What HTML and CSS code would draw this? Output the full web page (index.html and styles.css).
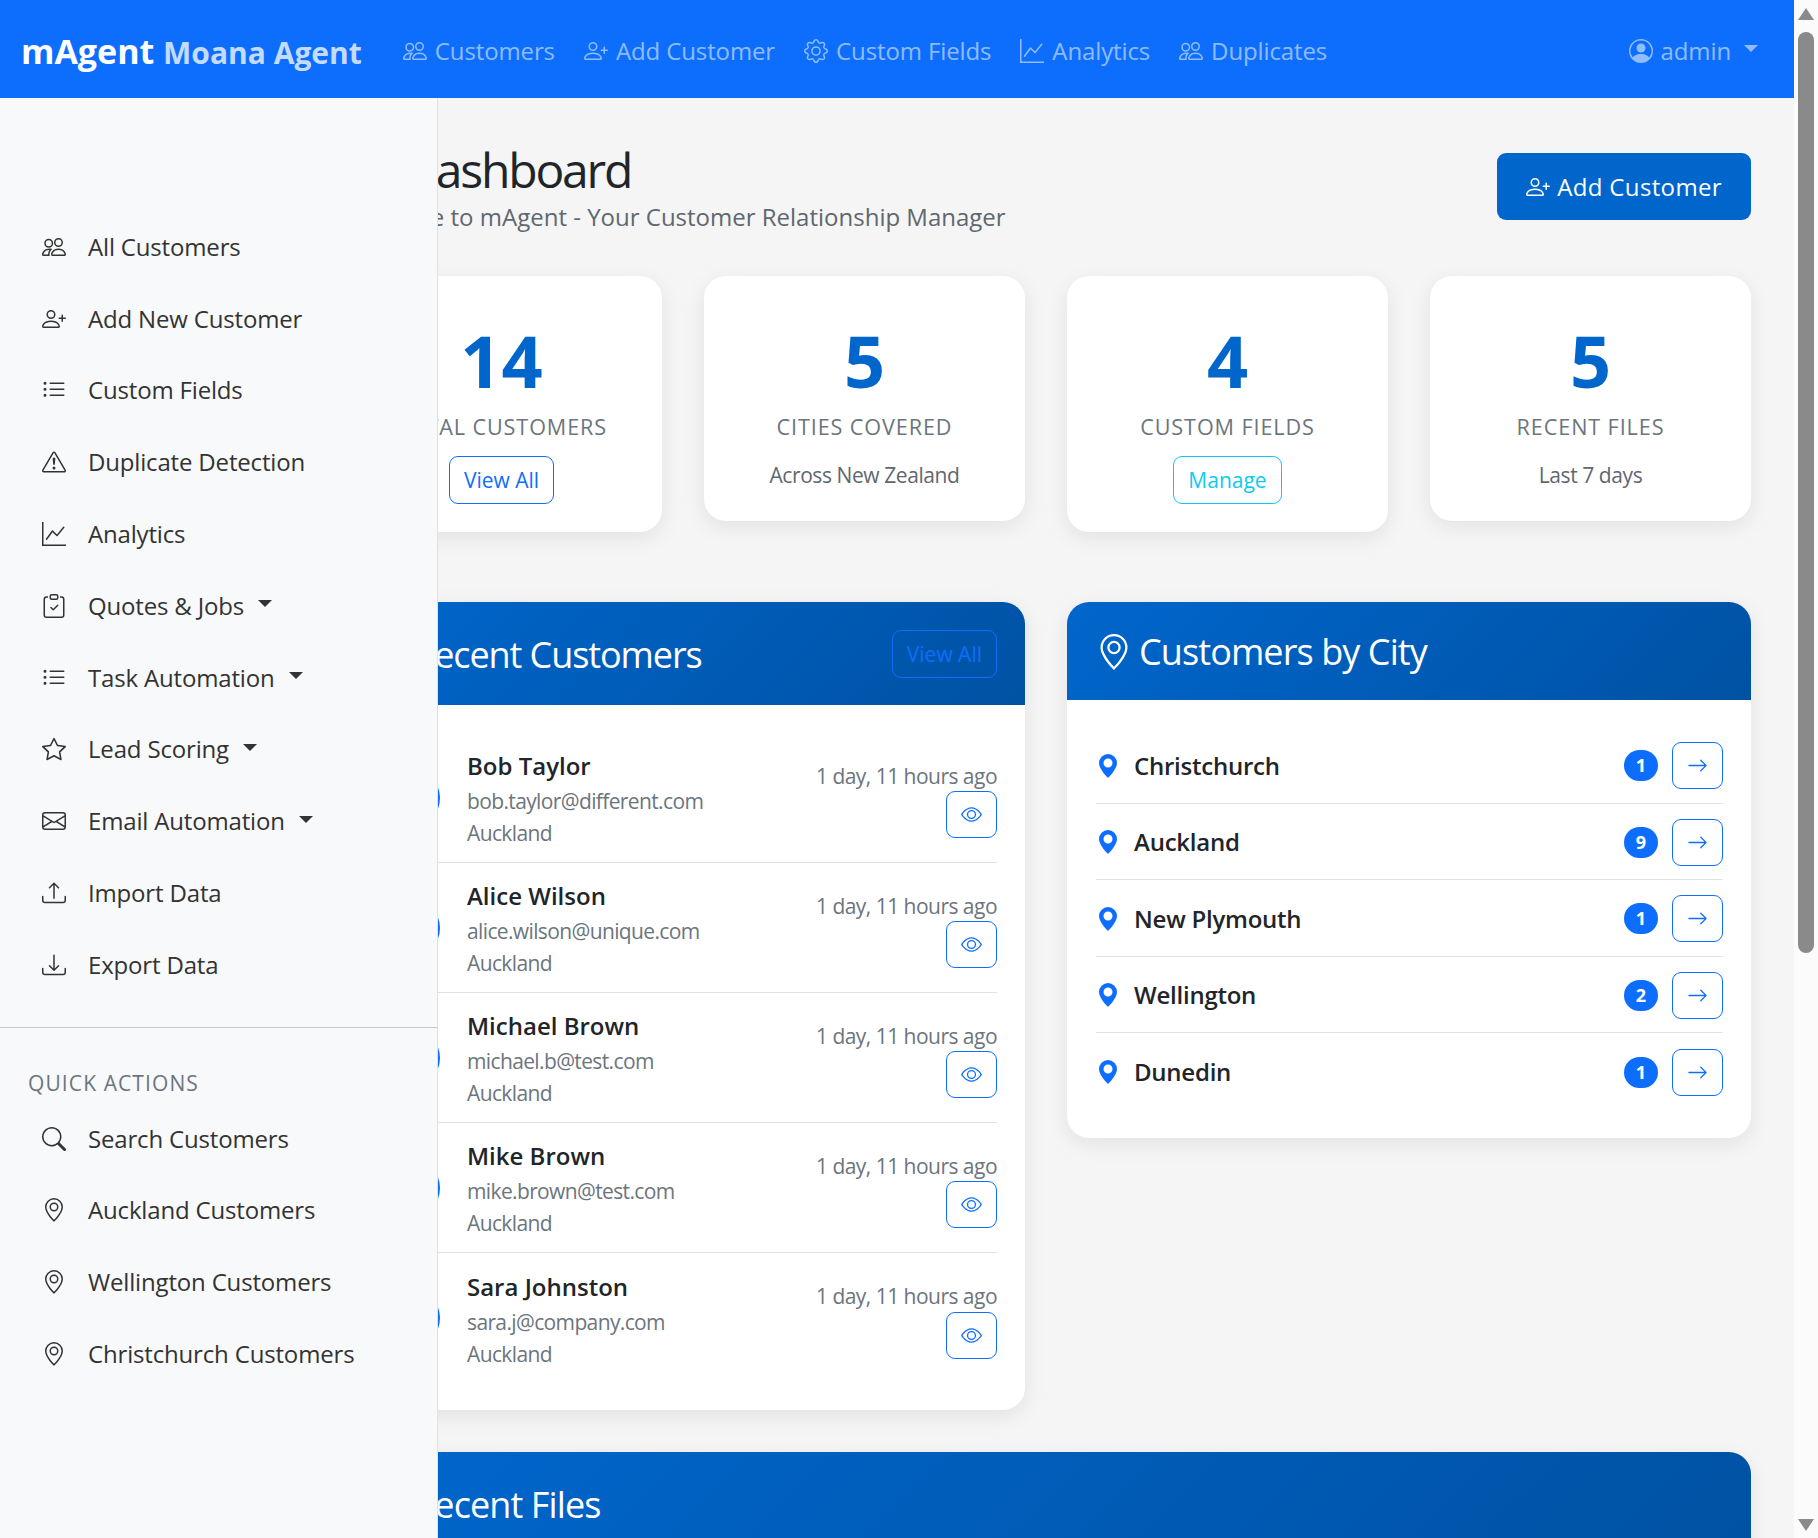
FILE: index.html
```html
<!DOCTYPE html>
<html lang="en">
<head>
    <meta charset="UTF-8">
    <meta name="viewport" content="width=device-width, initial-scale=1.0">
    <title>mAgent - Dashboard</title>
    <link rel="stylesheet" href="styles.css">
</head>
<body>

    <!-- icon sprite -->
    <svg class="sprite" xmlns="http://www.w3.org/2000/svg">
        <symbol id="i-people" viewBox="0 0 16 16"><path d="M15 14s1 0 1-1-1-4-5-4-5 3-5 4 1 1 1 1zm-7.978-1L7 12.996c.001-.264.167-1.03.76-1.72C8.312 10.629 9.282 10 11 10c1.717 0 2.687.63 3.24 1.276.593.69.758 1.457.76 1.72l-.008.002-.014.002zM11 7a2 2 0 1 0 0-4 2 2 0 0 0 0 4m3-2a3 3 0 1 1-6 0 3 3 0 0 1 6 0M6.936 9.28a6 6 0 0 0-1.23-.247A7 7 0 0 0 5 9c-4 0-5 3-5 4q0 1 1 1h4.216A2.24 2.24 0 0 1 5 13c0-1.01.377-2.042 1.09-2.904.243-.294.526-.569.846-.816M4.92 10A5.5 5.5 0 0 0 4 13H1c0-.26.164-1.03.76-1.724.545-.636 1.492-1.256 3.16-1.275ZM1.5 5.5a3 3 0 1 1 6 0 3 3 0 0 1-6 0m3-2a2 2 0 1 0 0 4 2 2 0 0 0 0-4"/></symbol>
        <symbol id="i-person-plus" viewBox="0 0 16 16"><path d="M6 8a3 3 0 1 0 0-6 3 3 0 0 0 0 6m2-3a2 2 0 1 1-4 0 2 2 0 0 1 4 0m4 8c0 1-1 1-1 1H1s-1 0-1-1 1-4 6-4 6 3 6 4m-1-.004c-.001-.246-.154-.986-.832-1.664C9.516 10.68 8.289 10 6 10s-3.516.68-4.168 1.332c-.678.678-.83 1.418-.832 1.664z"/><path d="M13.5 5a.5.5 0 0 1 .5.5V7h1.5a.5.5 0 0 1 0 1H14v1.5a.5.5 0 0 1-1 0V8h-1.5a.5.5 0 0 1 0-1H13V5.5a.5.5 0 0 1 .5-.5"/></symbol>
        <symbol id="i-gear" viewBox="0 0 16 16"><path d="M8 4.754a3.246 3.246 0 1 0 0 6.492 3.246 3.246 0 0 0 0-6.492M5.754 8a2.246 2.246 0 1 1 4.492 0 2.246 2.246 0 0 1-4.492 0"/><path d="M9.796 1.343c-.527-1.79-3.065-1.79-3.592 0l-.094.319a.873.873 0 0 1-1.255.52l-.292-.16c-1.64-.892-3.433.902-2.54 2.541l.159.292a.873.873 0 0 1-.52 1.255l-.319.094c-1.79.527-1.79 3.065 0 3.592l.319.094a.873.873 0 0 1 .52 1.255l-.16.292c-.892 1.64.901 3.434 2.541 2.54l.292-.159a.873.873 0 0 1 1.255.52l.094.319c.527 1.79 3.065 1.79 3.592 0l.094-.319a.873.873 0 0 1 1.255-.52l.292.16c1.64.893 3.434-.902 2.54-2.541l-.159-.292a.873.873 0 0 1 .52-1.255l.319-.094c1.79-.527 1.79-3.065 0-3.592l-.319-.094a.873.873 0 0 1-.52-1.255l.16-.292c.893-1.64-.902-3.433-2.541-2.54l-.292.159a.873.873 0 0 1-1.255-.52zm-2.633.283c.246-.835 1.428-.835 1.674 0l.094.319a1.873 1.873 0 0 0 2.693 1.115l.291-.16c.764-.415 1.6.42 1.184 1.185l-.159.292a1.873 1.873 0 0 0 1.116 2.692l.318.094c.835.246.835 1.428 0 1.674l-.319.094a1.873 1.873 0 0 0-1.115 2.693l.16.291c.415.764-.42 1.6-1.185 1.184l-.291-.159a1.873 1.873 0 0 0-2.693 1.116l-.094.318c-.246.835-1.428.835-1.674 0l-.094-.319a1.873 1.873 0 0 0-2.692-1.115l-.292.16c-.764.415-1.6-.42-1.184-1.185l.159-.291A1.873 1.873 0 0 0 1.945 8.93l-.319-.094c-.835-.246-.835-1.428 0-1.674l.319-.094A1.873 1.873 0 0 0 3.06 4.377l-.16-.292c-.415-.764.42-1.6 1.185-1.184l.292.159a1.873 1.873 0 0 0 2.692-1.115z"/></symbol>
        <symbol id="i-graph" viewBox="0 0 16 16"><path fill-rule="evenodd" d="M0 0h1v15h15v1H0zm14.817 3.113a.5.5 0 0 1 .07.704l-4.5 5.5a.5.5 0 0 1-.74.037L7.06 6.767l-3.656 5.027a.5.5 0 0 1-.808-.588l4-5.5a.5.5 0 0 1 .758-.06l2.609 2.61 4.15-5.073a.5.5 0 0 1 .704-.07"/></symbol>
        <symbol id="i-person-circle" viewBox="0 0 16 16"><path d="M11 6a3 3 0 1 1-6 0 3 3 0 0 1 6 0"/><path fill-rule="evenodd" d="M0 8a8 8 0 1 1 16 0A8 8 0 0 1 0 8m8-7a7 7 0 0 0-5.468 11.37C3.242 11.226 4.805 10 8 10s4.757 1.225 5.468 2.37A7 7 0 0 0 8 1"/></symbol>
        <symbol id="i-list" viewBox="0 0 16 16"><path fill-rule="evenodd" d="M5 11.5a.5.5 0 0 1 .5-.5h9a.5.5 0 0 1 0 1h-9a.5.5 0 0 1-.5-.5m0-4a.5.5 0 0 1 .5-.5h9a.5.5 0 0 1 0 1h-9a.5.5 0 0 1-.5-.5m0-4a.5.5 0 0 1 .5-.5h9a.5.5 0 0 1 0 1h-9a.5.5 0 0 1-.5-.5m-3 1a1 1 0 1 0 0-2 1 1 0 0 0 0 2m0 4a1 1 0 1 0 0-2 1 1 0 0 0 0 2m0 4a1 1 0 1 0 0-2 1 1 0 0 0 0 2"/></symbol>
        <symbol id="i-warning" viewBox="0 0 16 16"><path d="M7.938 2.016A.13.13 0 0 1 8.002 2a.13.13 0 0 1 .063.016.15.15 0 0 1 .054.057l6.857 11.667c.036.06.035.124.002.183a.2.2 0 0 1-.054.06.1.1 0 0 1-.066.017H1.146a.1.1 0 0 1-.066-.017.2.2 0 0 1-.054-.06.18.18 0 0 1 .002-.183L7.884 2.073a.15.15 0 0 1 .054-.057m1.044-.45a1.13 1.13 0 0 0-1.96 0L.165 13.233c-.457.778.091 1.767.98 1.767h13.713c.889 0 1.438-.99.98-1.767z"/><path d="M7.002 12a1 1 0 1 1 2 0 1 1 0 0 1-2 0M7.1 5.995a.905.905 0 1 1 1.8 0l-.35 3.507a.552.552 0 0 1-1.1 0z"/></symbol>
        <symbol id="i-clipboard" viewBox="0 0 16 16"><path fill-rule="evenodd" d="M10.854 7.146a.5.5 0 0 1 0 .708l-3 3a.5.5 0 0 1-.708 0l-1.5-1.5a.5.5 0 1 1 .708-.708L7.5 9.793l2.646-2.647a.5.5 0 0 1 .708 0"/><path d="M4 1.5H3a2 2 0 0 0-2 2V14a2 2 0 0 0 2 2h10a2 2 0 0 0 2-2V3.5a2 2 0 0 0-2-2h-1v1h1a1 1 0 0 1 1 1V14a1 1 0 0 1-1 1H3a1 1 0 0 1-1-1V3.5a1 1 0 0 1 1-1h1z"/><path d="M9.5 1a.5.5 0 0 1 .5.5v1a.5.5 0 0 1-.5.5h-3a.5.5 0 0 1-.5-.5v-1a.5.5 0 0 1 .5-.5zm-3-1A1.5 1.5 0 0 0 5 1.5v1A1.5 1.5 0 0 0 6.5 4h3A1.5 1.5 0 0 0 11 2.5v-1A1.5 1.5 0 0 0 9.5 0z"/></symbol>
        <symbol id="i-star" viewBox="0 0 16 16"><path d="M2.866 14.85c-.078.444.36.791.746.593l4.39-2.256 4.389 2.256c.386.198.824-.149.746-.592l-.83-4.73 3.522-3.356c.33-.314.16-.888-.282-.95l-4.898-.696L8.465.792a.513.513 0 0 0-.927 0L5.354 5.12l-4.898.696c-.441.062-.612.636-.283.95l3.523 3.356-.83 4.73zm4.905-2.767-3.686 1.894.694-3.957a.56.56 0 0 0-.163-.505L1.71 6.745l4.052-.576a.53.53 0 0 0 .393-.288L8 2.223l1.847 3.658a.53.53 0 0 0 .393.288l4.052.575-2.906 2.77a.56.56 0 0 0-.163.506l.694 3.957-3.686-1.894a.5.5 0 0 0-.461 0z"/></symbol>
        <symbol id="i-envelope" viewBox="0 0 16 16"><path d="M0 4a2 2 0 0 1 2-2h12a2 2 0 0 1 2 2v8a2 2 0 0 1-2 2H2a2 2 0 0 1-2-2zm2-1a1 1 0 0 0-1 1v.217l7 4.2 7-4.2V4a1 1 0 0 0-1-1zm13 2.383-4.708 2.825L15 11.105zm-.034 6.876-5.64-3.471L8 9.583l-1.326-.795-5.64 3.47A1 1 0 0 0 2 13h12a1 1 0 0 0 .966-.741M1 11.105l4.708-2.897L1 5.383z"/></symbol>
        <symbol id="i-upload" viewBox="0 0 16 16"><path d="M.5 9.9a.5.5 0 0 1 .5.5v2.5a1 1 0 0 0 1 1h12a1 1 0 0 0 1-1v-2.5a.5.5 0 0 1 1 0v2.5a2 2 0 0 1-2 2H2a2 2 0 0 1-2-2v-2.5a.5.5 0 0 1 .5-.5"/><path d="M7.646 1.146a.5.5 0 0 1 .708 0l3 3a.5.5 0 0 1-.708.708L8.5 2.707V11.5a.5.5 0 0 1-1 0V2.707L5.354 4.854a.5.5 0 1 1-.708-.708z"/></symbol>
        <symbol id="i-download" viewBox="0 0 16 16"><path d="M.5 9.9a.5.5 0 0 1 .5.5v2.5a1 1 0 0 0 1 1h12a1 1 0 0 0 1-1v-2.5a.5.5 0 0 1 1 0v2.5a2 2 0 0 1-2 2H2a2 2 0 0 1-2-2v-2.5a.5.5 0 0 1 .5-.5"/><path d="M7.646 11.854a.5.5 0 0 0 .708 0l3-3a.5.5 0 0 0-.708-.708L8.5 10.293V1.5a.5.5 0 0 0-1 0v8.793L5.354 8.146a.5.5 0 1 0-.708.708z"/></symbol>
        <symbol id="i-search" viewBox="0 0 16 16"><path d="M11.742 10.344a6.5 6.5 0 1 0-1.397 1.398h-.001q.044.06.098.115l3.85 3.85a1 1 0 0 0 1.415-1.414l-3.85-3.85a1 1 0 0 0-.115-.1zM12 6.5a5.5 5.5 0 1 1-11 0 5.5 5.5 0 0 1 11 0"/></symbol>
        <symbol id="i-geo" viewBox="0 0 16 16"><path d="M12.166 8.94c-.524 1.062-1.234 2.12-1.96 3.07A32 32 0 0 1 8 14.58a32 32 0 0 1-2.206-2.57c-.726-.95-1.436-2.008-1.96-3.07C3.304 7.867 3 6.862 3 6a5 5 0 0 1 10 0c0 .862-.305 1.867-.834 2.94M8 16s6-5.686 6-10A6 6 0 0 0 2 6c0 4.314 6 10 6 10"/><path d="M8 8a2 2 0 1 1 0-4 2 2 0 0 1 0 4m0 1a3 3 0 1 0 0-6 3 3 0 0 0 0 6"/></symbol>
        <symbol id="i-geo-fill" viewBox="0 0 16 16"><path d="M8 16s6-5.686 6-10A6 6 0 0 0 2 6c0 4.314 6 10 6 10m0-7a3 3 0 1 1 0-6 3 3 0 0 1 0 6"/></symbol>
        <symbol id="i-eye" viewBox="0 0 16 16"><path d="M16 8s-3-5.5-8-5.5S0 8 0 8s3 5.5 8 5.5S16 8 16 8M1.173 8a13 13 0 0 1 1.66-2.043C4.12 4.668 5.88 3.5 8 3.5s3.879 1.168 5.168 2.457A13 13 0 0 1 14.828 8q-.086.13-.195.288c-.335.48-.83 1.12-1.465 1.755C11.879 11.332 10.119 12.5 8 12.5s-3.879-1.168-5.168-2.457A13 13 0 0 1 1.172 8z"/><path d="M8 5.5a2.5 2.5 0 1 0 0 5 2.5 2.5 0 0 0 0-5M4.5 8a3.5 3.5 0 1 1 7 0 3.5 3.5 0 0 1-7 0"/></symbol>
        <symbol id="i-arrow" viewBox="0 0 16 16"><path fill-rule="evenodd" d="M1 8a.5.5 0 0 1 .5-.5h11.793l-3.147-3.146a.5.5 0 0 1 .708-.708l4 4a.5.5 0 0 1 0 .708l-4 4a.5.5 0 0 1-.708-.708L13.293 8.5H1.5A.5.5 0 0 1 1 8"/></symbol>
    </svg>

    <div class="page">
        <nav class="topbar">
            <a class="brand">mAgent <span class="brand-sub">Moana Agent</span></a>
            <div class="top-links">
                <a class="top-link"><svg class="icon"><use href="#i-people"/></svg>Customers</a>
                <a class="top-link"><svg class="icon"><use href="#i-person-plus"/></svg>Add Customer</a>
                <a class="top-link"><svg class="icon"><use href="#i-gear"/></svg>Custom Fields</a>
                <a class="top-link"><svg class="icon"><use href="#i-graph"/></svg>Analytics</a>
                <a class="top-link"><svg class="icon"><use href="#i-people"/></svg>Duplicates</a>
            </div>
            <a class="top-link user-link"><svg class="icon"><use href="#i-person-circle"/></svg>admin<span class="caret"></span></a>
        </nav>

        <div class="workspace">
            <aside class="sidebar">
                <ul class="side-menu">
                    <li class="side-item"><svg class="icon"><use href="#i-people"/></svg>All Customers</li>
                    <li class="side-item"><svg class="icon"><use href="#i-person-plus"/></svg>Add New Customer</li>
                    <li class="side-item"><svg class="icon"><use href="#i-list"/></svg>Custom Fields</li>
                    <li class="side-item"><svg class="icon"><use href="#i-warning"/></svg>Duplicate Detection</li>
                    <li class="side-item"><svg class="icon"><use href="#i-graph"/></svg>Analytics</li>
                    <li class="side-item"><svg class="icon"><use href="#i-clipboard"/></svg>Quotes &amp; Jobs<span class="caret"></span></li>
                    <li class="side-item"><svg class="icon"><use href="#i-list"/></svg>Task Automation<span class="caret"></span></li>
                    <li class="side-item"><svg class="icon"><use href="#i-star"/></svg>Lead Scoring<span class="caret"></span></li>
                    <li class="side-item"><svg class="icon"><use href="#i-envelope"/></svg>Email Automation<span class="caret"></span></li>
                    <li class="side-item"><svg class="icon"><use href="#i-upload"/></svg>Import Data</li>
                    <li class="side-item"><svg class="icon"><use href="#i-download"/></svg>Export Data</li>
                </ul>
                <hr class="side-divider">
                <h6 class="side-heading">Quick Actions</h6>
                <ul class="side-menu">
                    <li class="side-item"><svg class="icon"><use href="#i-search"/></svg>Search Customers</li>
                    <li class="side-item"><svg class="icon"><use href="#i-geo"/></svg>Auckland Customers</li>
                    <li class="side-item"><svg class="icon"><use href="#i-geo"/></svg>Wellington Customers</li>
                    <li class="side-item"><svg class="icon"><use href="#i-geo"/></svg>Christchurch Customers</li>
                </ul>
            </aside>

            <main class="main">
                <header class="page-head">
                    <div>
                        <h1 class="page-title"><svg class="icon"><use href="#i-graph"/></svg>Dashboard</h1>
                        <p class="page-sub">Welcome to mAgent - Your Customer Relationship Manager</p>
                    </div>
                    <a class="btn-add"><svg class="icon"><use href="#i-person-plus"/></svg>Add Customer</a>
                </header>

                <section class="stats">
                    <div class="stat-card">
                        <div class="stat-num">14</div>
                        <div class="stat-label">Total Customers</div>
                        <a class="btn-sm btn-blue">View All</a>
                    </div>
                    <div class="stat-card">
                        <div class="stat-num">5</div>
                        <div class="stat-label">Cities Covered</div>
                        <div class="stat-note">Across New Zealand</div>
                    </div>
                    <div class="stat-card">
                        <div class="stat-num">4</div>
                        <div class="stat-label">Custom Fields</div>
                        <a class="btn-sm btn-cyan">Manage</a>
                    </div>
                    <div class="stat-card">
                        <div class="stat-num">5</div>
                        <div class="stat-label">Recent Files</div>
                        <div class="stat-note">Last 7 days</div>
                    </div>
                </section>

                <section class="panels">
                    <div class="panel">
                        <div class="panel-head head-customers">
                            <h4 class="panel-title"><svg class="icon"><use href="#i-people"/></svg>Recent Customers</h4>
                            <a class="btn-sm btn-blue">View All</a>
                        </div>
                        <div class="panel-body body-customers">
                            <div class="cust-row">
                                <div class="avatar"></div>
                                <div class="cust-info">
                                    <div class="cust-name">Bob Taylor</div>
                                    <div class="cust-meta">bob.taylor@different.com</div>
                                    <div class="cust-meta">Auckland</div>
                                </div>
                                <div class="cust-side">
                                    <div class="cust-time">1 day, 11 hours ago</div>
                                    <a class="btn-icon"><svg class="icon"><use href="#i-eye"/></svg></a>
                                </div>
                            </div>
                            <div class="cust-row">
                                <div class="avatar"></div>
                                <div class="cust-info">
                                    <div class="cust-name">Alice Wilson</div>
                                    <div class="cust-meta">alice.wilson@unique.com</div>
                                    <div class="cust-meta">Auckland</div>
                                </div>
                                <div class="cust-side">
                                    <div class="cust-time">1 day, 11 hours ago</div>
                                    <a class="btn-icon"><svg class="icon"><use href="#i-eye"/></svg></a>
                                </div>
                            </div>
                            <div class="cust-row">
                                <div class="avatar"></div>
                                <div class="cust-info">
                                    <div class="cust-name">Michael Brown</div>
                                    <div class="cust-meta">michael.b@test.com</div>
                                    <div class="cust-meta">Auckland</div>
                                </div>
                                <div class="cust-side">
                                    <div class="cust-time">1 day, 11 hours ago</div>
                                    <a class="btn-icon"><svg class="icon"><use href="#i-eye"/></svg></a>
                                </div>
                            </div>
                            <div class="cust-row">
                                <div class="avatar"></div>
                                <div class="cust-info">
                                    <div class="cust-name">Mike Brown</div>
                                    <div class="cust-meta">mike.brown@test.com</div>
                                    <div class="cust-meta">Auckland</div>
                                </div>
                                <div class="cust-side">
                                    <div class="cust-time">1 day, 11 hours ago</div>
                                    <a class="btn-icon"><svg class="icon"><use href="#i-eye"/></svg></a>
                                </div>
                            </div>
                            <div class="cust-row">
                                <div class="avatar"></div>
                                <div class="cust-info">
                                    <div class="cust-name">Sara Johnston</div>
                                    <div class="cust-meta">sara.j@company.com</div>
                                    <div class="cust-meta">Auckland</div>
                                </div>
                                <div class="cust-side">
                                    <div class="cust-time">1 day, 11 hours ago</div>
                                    <a class="btn-icon"><svg class="icon"><use href="#i-eye"/></svg></a>
                                </div>
                            </div>
                        </div>
                    </div>

                    <div class="panel">
                        <div class="panel-head head-city">
                            <h4 class="panel-title"><svg class="icon"><use href="#i-geo"/></svg>Customers by City</h4>
                        </div>
                        <div class="panel-body body-city">
                            <div class="city-row">
                                <svg class="icon"><use href="#i-geo-fill"/></svg>
                                <span class="city-name">Christchurch</span>
                                <span class="badge">1</span>
                                <a class="btn-icon"><svg class="icon"><use href="#i-arrow"/></svg></a>
                            </div>
                            <div class="city-row">
                                <svg class="icon"><use href="#i-geo-fill"/></svg>
                                <span class="city-name">Auckland</span>
                                <span class="badge">9</span>
                                <a class="btn-icon"><svg class="icon"><use href="#i-arrow"/></svg></a>
                            </div>
                            <div class="city-row">
                                <svg class="icon"><use href="#i-geo-fill"/></svg>
                                <span class="city-name">New Plymouth</span>
                                <span class="badge">1</span>
                                <a class="btn-icon"><svg class="icon"><use href="#i-arrow"/></svg></a>
                            </div>
                            <div class="city-row">
                                <svg class="icon"><use href="#i-geo-fill"/></svg>
                                <span class="city-name">Wellington</span>
                                <span class="badge">2</span>
                                <a class="btn-icon"><svg class="icon"><use href="#i-arrow"/></svg></a>
                            </div>
                            <div class="city-row">
                                <svg class="icon"><use href="#i-geo-fill"/></svg>
                                <span class="city-name">Dunedin</span>
                                <span class="badge">1</span>
                                <a class="btn-icon"><svg class="icon"><use href="#i-arrow"/></svg></a>
                            </div>
                        </div>
                    </div>
                </section>

                <section class="panel files-panel">
                    <div class="panel-head head-files">
                        <h4 class="panel-title"><svg class="icon"><use href="#i-clipboard"/></svg>Recent Files</h4>
                    </div>
                </section>
            </main>
        </div>
    </div>

    <div class="scrollbar">
        <span class="scroll-up"></span>
        <div class="scroll-track"><div class="scroll-thumb"></div></div>
        <span class="scroll-down"></span>
    </div>

</body>
</html>
```
FILE: styles.css
```css
html, body {
    height: 100%;
}

body {
    margin: 0;
    display: flex;
    overflow: hidden;
    font-family: "Open Sans", "Noto Sans", sans-serif;
    font-size: 24px;
    line-height: 1.5;
    color: #212529;
    background-color: #f5f5f5;
}

.sprite {
    display: none;
}

.icon {
    width: 24px;
    height: 24px;
    fill: currentColor;
    flex: none;
}

.caret {
    display: inline-block;
    margin-left: 12px;
    border-top: 7px solid currentColor;
    border-left: 7px solid transparent;
    border-right: 7px solid transparent;
    position: relative;
    top: -2px;
}

.page {
    flex: 1;
    min-width: 0;
    display: flex;
    flex-direction: column;
}

/* top navbar */
.topbar {
    height: 98px;
    flex: none;
    display: flex;
    align-items: center;
    padding: 0 36px 0 21px;
    background-color: #0d6efd;
}

.brand {
    font-size: 34px;
    font-weight: 700;
    color: #fff;
    white-space: nowrap;
    margin: 4px 41px 0 0;
}

.brand-sub {
    font-size: 30px;
    color: #c3dbff;
}

.top-links {
    display: flex;
    gap: 29px;
    flex: 1;
}

.top-link {
    display: flex;
    align-items: center;
    gap: 8px;
    color: rgba(255, 255, 255, 0.55);
    white-space: nowrap;
    margin-top: 3px;
    letter-spacing: -0.005em;
}

.top-link .caret {
    margin-left: 5px;
}

/* sidebar lies over the main column */
.workspace {
    flex: 1;
    min-height: 0;
    position: relative;
    overflow: hidden;
}

.sidebar {
    position: absolute;
    top: 0;
    bottom: 0;
    left: 0;
    width: 437px;
    padding-top: 113px;
    box-sizing: content-box;
    background-color: #f8f9fa;
    border-right: 1.5px solid #dee2e6;
    color: #333;
    z-index: 2;
}

.side-menu {
    list-style: none;
    margin: 0;
    padding: 0;
}

.side-item {
    display: flex;
    align-items: center;
    gap: 22px;
    height: 71.8px;
    padding-left: 42px;
    letter-spacing: -0.007em;
}

.side-item .caret {
    margin-left: -8px;
}

.side-divider {
    margin: 26px 0 0;
    border: 0;
    border-top: 1.5px solid #c4c8cc;
}

.side-heading {
    margin: 39px 0 0 28px;
    height: 36px;
    font-size: 21px;
    font-weight: 400;
    line-height: 32px;
    letter-spacing: 1.1px;
    text-transform: uppercase;
    color: #6c757d;
}

/* main column */
.main {
    padding: 0 43px 0 341px;
}

.page-head {
    display: flex;
    justify-content: space-between;
    align-items: flex-start;
    padding-top: 42px;
    height: 178px;
    box-sizing: border-box;
}

.page-title {
    display: flex;
    align-items: center;
    gap: 14px;
    margin: 0;
    font-size: 48px;
    font-weight: 500;
    line-height: 59px;
    letter-spacing: -0.045em;
}

.page-title .icon {
    width: 48px;
    height: 48px;
}

.page-sub {
    margin: 0;
    color: #5f6770;
}

.btn-add {
    display: flex;
    align-items: center;
    gap: 7px;
    height: 67px;
    margin-top: 13px;
    padding: 0 29px;
    border-radius: 9px;
    background-color: #0066cc;
    color: #fff;
    font-weight: 500;
    letter-spacing: 0.015em;
}

.stats {
    display: grid;
    grid-template-columns: repeat(4, 1fr);
    gap: 42px;
    align-items: start;
}

.stat-card {
    padding: 28px;
    text-align: center;
    background-color: #fff;
    border-radius: 22px;
    box-shadow: 0 6px 22px rgba(0, 0, 0, 0.08);
}

.stat-num {
    padding-top: 5px;
    font-size: 72px;
    font-weight: 700;
    line-height: 102px;
    color: #0066cc;
}

.stat-label {
    font-size: 21.6px;
    line-height: 32px;
    letter-spacing: 0.9px;
    text-transform: uppercase;
    color: #6c757d;
    margin-bottom: 13px;
}

.stat-note {
    margin-top: 14px;
    font-size: 21px;
    line-height: 36px;
    letter-spacing: -0.02em;
    color: #5f6770;
}

.btn-sm {
    display: inline-block;
    padding: 0 14px;
    height: 46px;
    line-height: 46px;
    font-size: 21px;
    border: 1.5px solid;
    border-radius: 9px;
}

.btn-blue {
    color: #0d6efd;
}

.btn-cyan {
    color: #0dcaf0;
}

.panels {
    display: grid;
    grid-template-columns: 1fr 1fr;
    gap: 42px;
    align-items: start;
    margin-top: 70px;
}

.panel {
    background-color: #fff;
    border-radius: 22px;
    box-shadow: 0 6px 22px rgba(0, 0, 0, 0.08);
}

.panel-head {
    display: flex;
    align-items: center;
    justify-content: space-between;
    padding: 0 28px 0 29px;
    border-radius: 22px 22px 0 0;
    background: linear-gradient(135deg, #0066cc, #0052a3);
    color: #fff;
}

.head-customers, .head-files {
    height: 103px;
}

.head-city {
    height: 98px;
}

.panel-title {
    display: flex;
    align-items: center;
    gap: 7px;
    margin: 2px 0 0;
    font-size: 36px;
    font-weight: 500;
    line-height: 1.2;
    letter-spacing: -0.025em;
}

.head-customers .panel-title {
    letter-spacing: -0.03em;
}

.panel-title .icon {
    width: 36px;
    height: 36px;
}

.panel-body {
    padding: 28px 28px 27px 29px;
}

.body-city {
    padding: 27px 28px 28px 29px;
}

/* recent customers */
.cust-row {
    display: flex;
    align-items: center;
    height: 130px;
    box-sizing: border-box;
    padding-left: 10px;
    border-bottom: 1.5px solid #dee2e6;
}

.cust-row:last-child {
    border-bottom: 0;
}

.avatar {
    width: 60px;
    height: 60px;
    margin-right: 27px;
    border-radius: 50%;
    background-color: #0d6efd;
    flex: none;
}

.cust-info {
    flex: 1;
}

.cust-name {
    font-weight: 600;
    line-height: 36px;
    margin: 2px 0 1px;
}

.cust-meta {
    font-size: 21px;
    line-height: 32px;
    letter-spacing: -0.03em;
    color: #6c757d;
}

.cust-side {
    display: flex;
    flex-direction: column;
    align-items: flex-end;
    margin-top: 4px;
}

.cust-time {
    font-size: 21px;
    line-height: 31.5px;
    letter-spacing: -0.025em;
    color: #6c757d;
}

.btn-icon {
    display: flex;
    align-items: center;
    justify-content: center;
    box-sizing: border-box;
    width: 51px;
    height: 47px;
    border: 1.5px solid #0d6efd;
    border-radius: 9px;
    color: #0d6efd;
    flex: none;
}

.cust-side .btn-icon {
    margin-top: -1px;
}

.btn-icon .icon {
    width: 21px;
    height: 21px;
}

/* customers by city */
.city-row {
    display: flex;
    align-items: center;
    height: 76.5px;
    box-sizing: border-box;
    padding-top: 2px;
    border-bottom: 1.5px solid #dee2e6;
}

.city-row:last-child {
    border-bottom: 0;
}

.city-row > .icon {
    color: #0d6efd;
    margin-right: 14px;
}

.city-name {
    flex: 1;
    font-weight: 600;
    letter-spacing: -0.01em;
}

.badge {
    display: flex;
    align-items: center;
    justify-content: center;
    width: 34px;
    height: 31px;
    margin-right: 14px;
    border-radius: 16px;
    background-color: #0d6efd;
    color: #fff;
    font-size: 18px;
    font-weight: 700;
}

.files-panel {
    margin-top: 42px;
    height: 200px;
}

/* the browser scrollbar in the reference */
.scrollbar {
    width: 24px;
    flex: none;
    display: flex;
    flex-direction: column;
    align-items: center;
    background-color: #fbfbfb;
}

.scroll-up, .scroll-down {
    flex: none;
    border-left: 8px solid transparent;
    border-right: 8px solid transparent;
}

.scroll-up {
    margin-top: 8px;
    border-bottom: 12px solid #8a8a8a;
}

.scroll-down {
    margin-bottom: 7px;
    border-top: 12px solid #8a8a8a;
}

.scroll-track {
    flex: 1;
    width: 16px;
    padding-top: 12px;
}

.scroll-thumb {
    height: 921px;
    border-radius: 8px;
    background-color: #8a8a8a;
}
```
